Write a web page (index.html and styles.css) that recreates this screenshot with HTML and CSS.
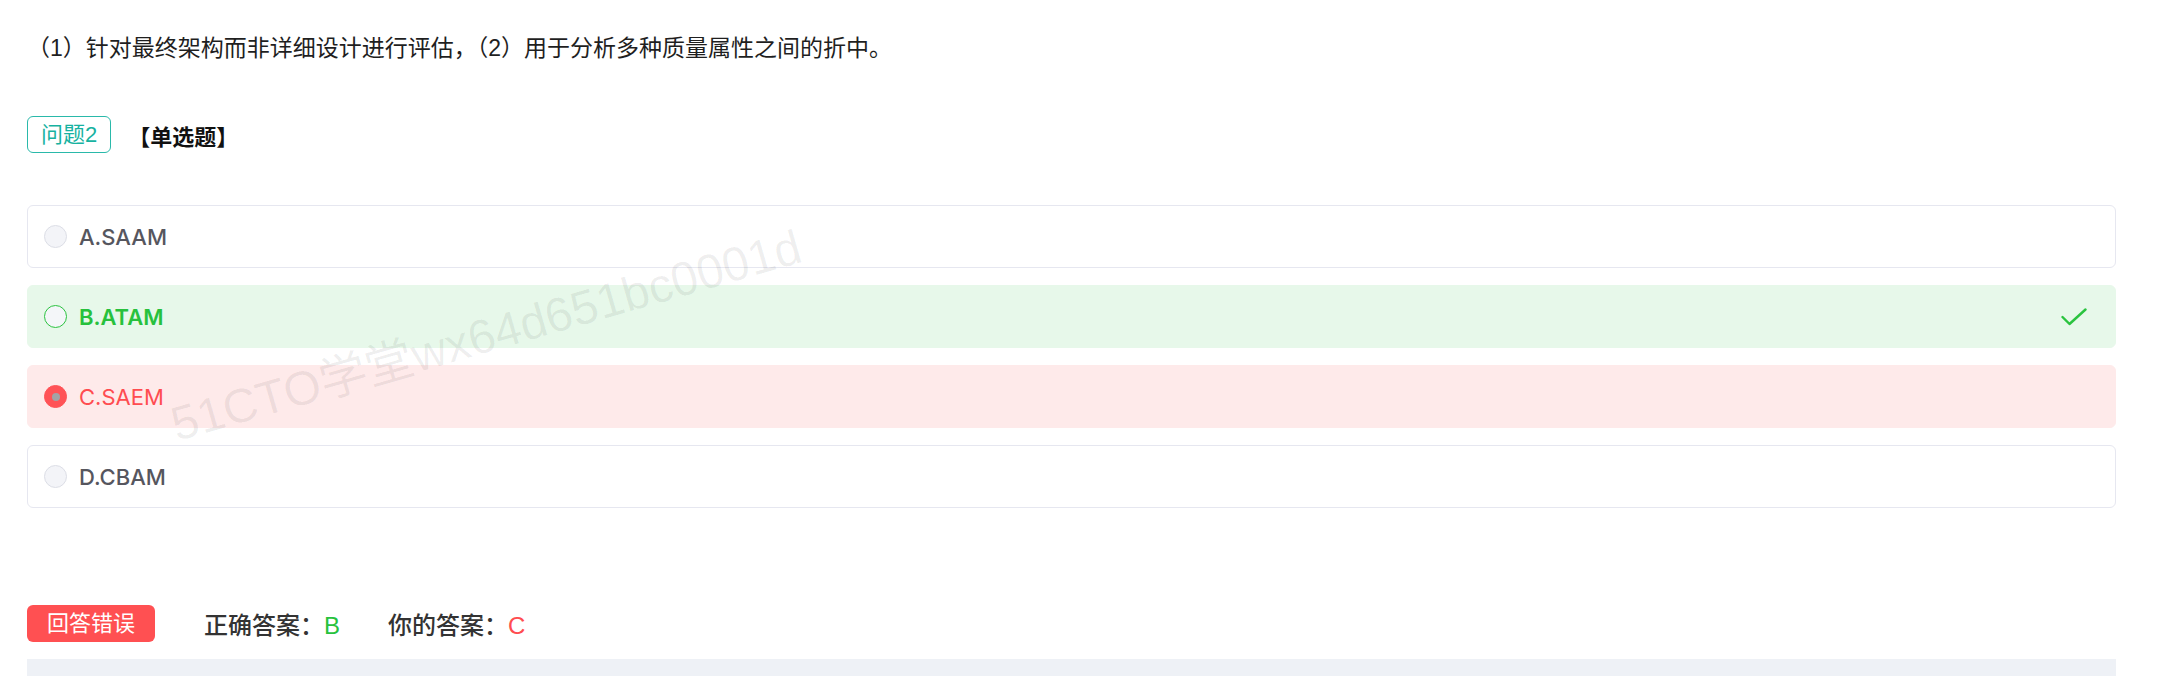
FILE: index.html
```html
<!DOCTYPE html>
<html lang="zh-CN">
<head>
<meta charset="utf-8">
<title>问题2</title>
<link rel="stylesheet" href="styles.css">
</head>
<body>
<div class="page">
  <p class="stem">（1）针对最终架构而非详细设计进行评估，（2）用于分析多种质量属性之间的折中。</p>

  <div class="q-head">
    <span class="q-tag">问题2</span>
    <span class="q-type">【单选题】</span>
  </div>

  <ul class="options">
    <li class="option">
      <span class="radio"></span>
      <span class="label">A.SAAM</span>
    </li>
    <li class="option option-right">
      <span class="radio"></span>
      <span class="label">B.ATAM</span>
      <svg class="check" width="26" height="18" viewBox="0 0 26 18"><path d="M1.5 9 L8.5 16 L24.5 1.5" fill="none" stroke="#2ac33f" stroke-width="2.4" stroke-linecap="round" stroke-linejoin="round"/></svg>
    </li>
    <li class="option option-wrong">
      <span class="radio"></span>
      <span class="label">C.SAEM</span>
    </li>
    <li class="option">
      <span class="radio"></span>
      <span class="label">D.CBAM</span>
    </li>
    <li class="watermark">51CTO学堂wx64d651bc0001d</li>
  </ul>

  <div class="result">
    <span class="badge">回答错误</span>
    <span class="answer">正确答案：<b class="ok">B</b></span>
    <span class="answer">你的答案：<b class="bad">C</b></span>
  </div>

  <div class="analysis"></div>
</div>
</body>
</html>
```

FILE: styles.css
```css
* {
  box-sizing: border-box;
}

html, body {
  margin: 0;
  padding: 0;
  background: #ffffff;
}

body {
  font-family: "Liberation Sans", "Noto Sans CJK SC", sans-serif;
  font-size: 22px;
  color: #222222;
  overflow: hidden;
}

.page {
  padding: 32px 42px 0 27px;
}

.stem {
  margin: 0;
  font-size: 23px;
  line-height: 33px;
  height: 33px;
  color: #1f1f1f;
}

.q-head {
  display: flex;
  align-items: center;
  margin-top: 51px;
  height: 37px;
}

.q-tag {
  display: inline-flex;
  align-items: center;
  height: 37px;
  padding: 0 13px;
  border: 1px solid #2ab9aa;
  border-radius: 6px;
  color: #17b2a1;
  line-height: 1;
}

.q-type {
  margin-left: 17px;
  font-weight: 600;
  color: #111111;
}

.options {
  position: relative;
  list-style: none;
  margin: 52px 0 0;
  padding: 0;
  display: flex;
  flex-direction: column;
  gap: 17px;
}

.option {
  display: flex;
  align-items: center;
  height: 63px;
  padding: 0 28px 0 16px;
  border: 1px solid #e6e7f0;
  border-radius: 6px;
  background: #ffffff;
}

.radio {
  flex: none;
  width: 23px;
  height: 23px;
  border-radius: 50%;
  border: 1px solid #dcdee6;
  background: #f3f4f8;
}

.label {
  margin-left: 12px;
  font-family: Inter, "Liberation Sans", sans-serif;
  font-weight: 500;
  color: #56565e;
}

.option-right {
  border-color: #e7f8ea;
  background: #e7f8ea;
}

.option-right .radio {
  border-color: #2ac33f;
  background: #f4f6f9;
}

.option-right .label {
  color: #27c13d;
  font-weight: 600;
}

.check {
  margin-left: auto;
}

.option-wrong {
  border-color: #feeaea;
  background: #feeaea;
}

.option-wrong .radio {
  border-color: #ff5357;
  background: #ff5357;
  display: flex;
  align-items: center;
  justify-content: center;
}

.option-wrong .radio::after {
  content: "";
  width: 8px;
  height: 8px;
  border-radius: 50%;
  background: #a3a3a6;
}

.option-wrong .label {
  color: #ff4c50;
  font-weight: 400;
}

/* light diagonal account watermark drawn across the options */
.watermark {
  position: absolute;
  left: 152px;
  top: 196px;
  font-size: 48px;
  line-height: 1;
  white-space: nowrap;
  color: rgba(0, 0, 0, 0.065);
  transform: rotate(-16deg);
  transform-origin: left bottom;
  pointer-events: none;
}

.result {
  display: flex;
  align-items: center;
  margin-top: 97px;
  height: 37px;
}

.badge {
  display: inline-flex;
  align-items: center;
  height: 37px;
  padding: 0 20px;
  border-radius: 6px;
  background: #ff5052;
  color: #ffffff;
  line-height: 1;
}

.answer {
  margin-left: 49px;
  font-size: 24px;
  font-weight: 500;
  color: #333333;
}

.answer + .answer {
  margin-left: 48px;
}

.answer b {
  font-weight: 400;
}

.ok {
  color: #27c23d;
}

.bad {
  color: #ff4c50;
}

.analysis {
  margin-top: 17px;
  height: 17px;
  background: #eef1f6;
}
```
